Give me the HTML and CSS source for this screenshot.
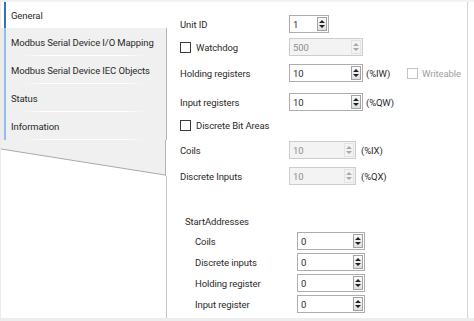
FILE: index.html
```html
<!DOCTYPE html>
<html>
<head>
<meta charset="utf-8">
<link rel="stylesheet" href="styles.css">
</head>
<body>
<div class="window">
  <nav class="nav">
    <div class="tab active">General</div>
    <div class="tabs">
      <div class="tab">Modbus Serial Device I/O Mapping</div>
      <div class="tab">Modbus Serial Device IEC Objects</div>
      <div class="tab">Status</div>
      <div class="tab">Information</div>
    </div>
    <svg class="slant" width="165" height="36" viewBox="0 0 165 36">
      <polygon points="0,0 164,0 164,35 0,9" fill="#f0f0f0"/>
      <line x1="0" y1="9" x2="164" y2="35" stroke="#a9a9a9" stroke-width="1"/>
      <line x1="164.5" y1="0" x2="164.5" y2="36" stroke="#b4b4b4" stroke-width="1"/>
    </svg>
    <div class="nav-rest"></div>
  </nav>

  <main class="content">
    <div class="row r1">
      <span class="lbl">Unit ID</span>
      <span class="spin w40"><span class="val">1</span><span class="btn"><svg width="8" height="12" viewBox="0 0 8 12"><path d="M4 2 L7 5 L1 5 Z M4 10 L7 7 L1 7 Z" fill="#222"/></svg></span></span>
    </div>
    <div class="row r2">
      <span class="cb"></span><span class="lbl-cb">Watchdog</span>
      <span class="spin w74 dis"><span class="val">500</span><span class="btn"><svg width="8" height="12" viewBox="0 0 8 12"><path d="M4 2 L7 5 L1 5 Z M4 10 L7 7 L1 7 Z" fill="#a8a8a8"/></svg></span></span>
    </div>
    <div class="row r3">
      <span class="lbl">Holding registers</span>
      <span class="spin w74"><span class="val">10</span><span class="btn"><svg width="8" height="12" viewBox="0 0 8 12"><path d="M4 2 L7 5 L1 5 Z M4 10 L7 7 L1 7 Z" fill="#222"/></svg></span></span>
      <span class="sfx">(%IW)</span>
      <span class="cb off"></span><span class="muted">Writeable</span>
    </div>
    <div class="row r4">
      <span class="lbl">Input registers</span>
      <span class="spin w74"><span class="val">10</span><span class="btn"><svg width="8" height="12" viewBox="0 0 8 12"><path d="M4 2 L7 5 L1 5 Z M4 10 L7 7 L1 7 Z" fill="#222"/></svg></span></span>
      <span class="sfx">(%QW)</span>
    </div>
    <div class="row r5">
      <span class="cb"></span><span class="lbl-cb">Discrete Bit Areas</span>
    </div>
    <div class="row r6">
      <span class="lbl">Coils</span>
      <span class="spin w67 dis"><span class="val">10</span><span class="btn"><svg width="8" height="12" viewBox="0 0 8 12"><path d="M4 2 L7 5 L1 5 Z M4 10 L7 7 L1 7 Z" fill="#a8a8a8"/></svg></span></span>
      <span class="sfx sfx2">(%IX)</span>
    </div>
    <div class="row r7">
      <span class="lbl">Discrete Inputs</span>
      <span class="spin w67 dis"><span class="val">10</span><span class="btn"><svg width="8" height="12" viewBox="0 0 8 12"><path d="M4 2 L7 5 L1 5 Z M4 10 L7 7 L1 7 Z" fill="#a8a8a8"/></svg></span></span>
      <span class="sfx sfx2">(%QX)</span>
    </div>

    <section class="group">
      <div class="row r8"><span>StartAddresses</span></div>
      <div class="row sub r9">
        <span class="lbl2">Coils</span>
        <span class="spin w68"><span class="val">0</span><span class="btn"><svg width="8" height="12" viewBox="0 0 8 12"><path d="M4 2 L7 5 L1 5 Z M4 10 L7 7 L1 7 Z" fill="#222"/></svg></span></span>
      </div>
      <div class="row sub r10">
        <span class="lbl2">Discrete inputs</span>
        <span class="spin w68"><span class="val">0</span><span class="btn"><svg width="8" height="12" viewBox="0 0 8 12"><path d="M4 2 L7 5 L1 5 Z M4 10 L7 7 L1 7 Z" fill="#222"/></svg></span></span>
      </div>
      <div class="row sub r10">
        <span class="lbl2">Holding register</span>
        <span class="spin w68"><span class="val">0</span><span class="btn"><svg width="8" height="12" viewBox="0 0 8 12"><path d="M4 2 L7 5 L1 5 Z M4 10 L7 7 L1 7 Z" fill="#222"/></svg></span></span>
      </div>
      <div class="row sub r10">
        <span class="lbl2">Input register</span>
        <span class="spin w68"><span class="val">0</span><span class="btn"><svg width="8" height="12" viewBox="0 0 8 12"><path d="M4 2 L7 5 L1 5 Z M4 10 L7 7 L1 7 Z" fill="#222"/></svg></span></span>
      </div>
    </section>
  </main>
</div>
</body>
</html>
```

FILE: styles.css
```css
* { box-sizing: border-box; }
html, body { margin: 0; padding: 0; }
body {
  width: 474px;
  height: 321px;
  overflow: hidden;
  background: #fff;
  font-family: Roboto, "Liberation Sans", sans-serif;
  font-size: 9.5px;
  letter-spacing: -0.1px;
  color: #2a2a2a;
}
.window {
  display: flex;
  height: 321px;
  border-top: 2px solid #f2f2f2;
  border-bottom: 3px solid #ededed;
  border-left: 1px solid #ececec;
  padding-right: 6px;
}

/* left navigation */
.nav {
  width: 166px;
  flex: none;
  display: flex;
  flex-direction: column;
}
.tab {
  height: 28px;
  display: flex;
  align-items: center;
  padding-left: 5px;
  border-left: 2px solid #94bde9;
  white-space: nowrap;
}
.tab.active {
  background: #fff;
  border-left-color: #2f72c6;
  height: 26px;
  margin-left: 3px;
}
.tabs {
  background: #ebebeb;
  padding-left: 3px;
  border-right: 1px solid #b4b4b4;
}
.tabs .tab {
  background: #f0f0f0 linear-gradient(to right, rgba(255,255,255,0), #fff 15%, #fff 85%, rgba(255,255,255,0)) no-repeat;
  background-size: 122px 1px;
  background-position: 17px 100%;
}
.slant { display: block; }
.nav-rest {
  flex: 1;
  border-right: 1px solid #c4c4c4;
}

/* content */
.content {
  flex: 1;
  border-right: 1px solid #d6d6d6;
  padding: 13px 0 0 13px;
}
.row {
  display: flex;
  align-items: center;
  height: 18px;
  white-space: nowrap;
}
.r2 { margin-top: 5px; }
.r3 { margin-top: 8px; }
.r4 { margin-top: 11px; }
.r5 { margin-top: 5px; }
.r6 { margin-top: 7px; }
.r7 { margin-top: 8px; }
.r8 { margin-top: 27px; }
.r9 { margin-top: 2px; }
.r10 { margin-top: 3px; }

.lbl { width: 109px; }
.lbl-cb { width: 93px; }
.cb {
  width: 11px;
  height: 11px;
  border: 1px solid #3a3a3a;
  background: #fff;
  margin-right: 5px;
  flex: none;
}
.cb.off { border-color: #c4c4c4; margin-right: 4px; }
.muted { color: #a0a0a0; }

.spin {
  display: flex;
  align-items: center;
  justify-content: space-between;
  height: 18px;
  border: 1px solid #adadad;
  background: #fff;
  padding-left: 3px;
  padding-right: 1px;
  flex: none;
}
.w40 { width: 40px; }
.w67 { width: 67px; }
.w68 { width: 68px; }
.w74 { width: 74px; }
.btn {
  width: 10px;
  height: 14px;
  border: 1px solid #a3a3a3;
  background: linear-gradient(#fbfbfb, #dedede);
  display: flex;
  align-items: center;
  justify-content: center;
}
.btn svg { display: block; }
.spin.dis {
  background: #f3f3f3;
  border-color: #cdcdcd;
  color: #8e8e8e;
}
.spin.dis .btn {
  border-color: #e2e2e2;
  background: #f3f3f3;
}
.sfx { width: 44px; padding-left: 3px; }
.sfx2 { padding-left: 5px; }

.group { padding-left: 5px; }
.sub { padding-left: 10px; }
.lbl2 { width: 102px; }
```
